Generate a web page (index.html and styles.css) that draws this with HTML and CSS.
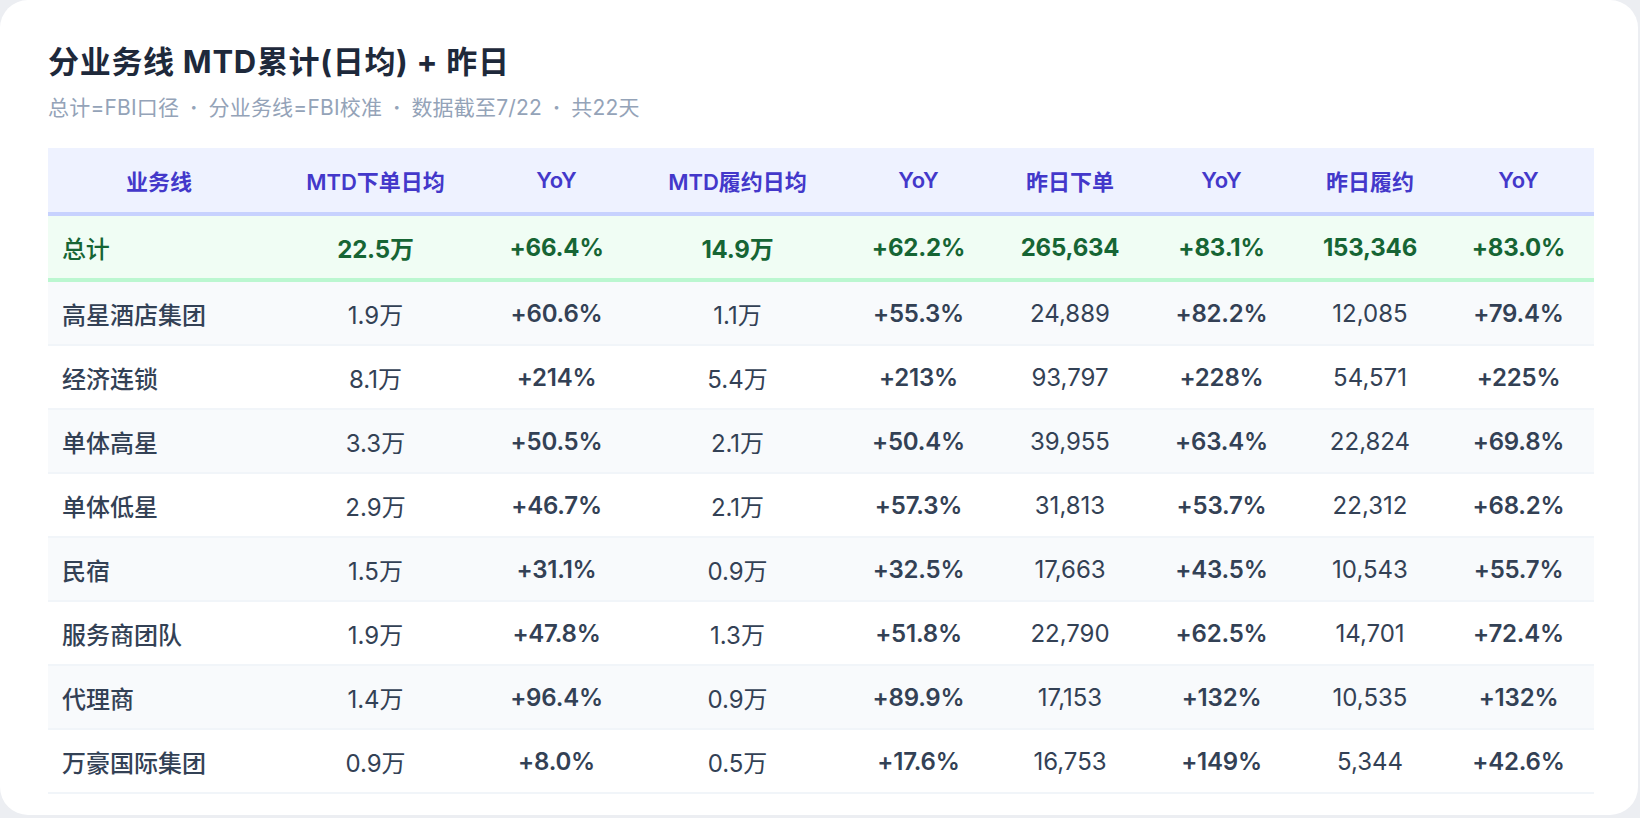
FILE: index.html
```html
<!DOCTYPE html>
<html lang="zh-CN">
<head>
<meta charset="utf-8">
<title>分业务线 MTD累计(日均) + 昨日</title>
<link rel="stylesheet" href="styles.css">
</head>
<body>
<div class="card">
  <h1 class="title">分业务线 MTD累计(日均) + 昨日</h1>
  <p class="subtitle">总计=FBI口径<span class="sep">·</span>分业务线=FBI校准<span class="sep">·</span>数据截至7/22<span class="sep">·</span>共22天</p>
  <table class="grid">
    <colgroup>
      <col class="c-name"><col class="c-mtd"><col class="c-yoy"><col class="c-mtd"><col class="c-yoy"><col class="c-day"><col class="c-yoy"><col class="c-day2"><col class="c-yoy">
    </colgroup>
    <thead>
      <tr>
        <th>业务线</th><th>MTD下单日均</th><th>YoY</th><th>MTD履约日均</th><th>YoY</th><th>昨日下单</th><th>YoY</th><th>昨日履约</th><th>YoY</th>
      </tr>
    </thead>
    <tbody>
      <tr class="total">
        <td class="name">总计</td><td>22.5万</td><td>+66.4%</td><td>14.9万</td><td>+62.2%</td><td>265,634</td><td>+83.1%</td><td>153,346</td><td>+83.0%</td>
      </tr>
      <tr class="row odd">
        <td class="name">高星酒店集团</td><td>1.9万</td><td class="yoy">+60.6%</td><td>1.1万</td><td class="yoy">+55.3%</td><td>24,889</td><td class="yoy">+82.2%</td><td>12,085</td><td class="yoy">+79.4%</td>
      </tr>
      <tr class="row">
        <td class="name">经济连锁</td><td>8.1万</td><td class="yoy">+214%</td><td>5.4万</td><td class="yoy">+213%</td><td>93,797</td><td class="yoy">+228%</td><td>54,571</td><td class="yoy">+225%</td>
      </tr>
      <tr class="row odd">
        <td class="name">单体高星</td><td>3.3万</td><td class="yoy">+50.5%</td><td>2.1万</td><td class="yoy">+50.4%</td><td>39,955</td><td class="yoy">+63.4%</td><td>22,824</td><td class="yoy">+69.8%</td>
      </tr>
      <tr class="row">
        <td class="name">单体低星</td><td>2.9万</td><td class="yoy">+46.7%</td><td>2.1万</td><td class="yoy">+57.3%</td><td>31,813</td><td class="yoy">+53.7%</td><td>22,312</td><td class="yoy">+68.2%</td>
      </tr>
      <tr class="row odd">
        <td class="name">民宿</td><td>1.5万</td><td class="yoy">+31.1%</td><td>0.9万</td><td class="yoy">+32.5%</td><td>17,663</td><td class="yoy">+43.5%</td><td>10,543</td><td class="yoy">+55.7%</td>
      </tr>
      <tr class="row">
        <td class="name">服务商团队</td><td>1.9万</td><td class="yoy">+47.8%</td><td>1.3万</td><td class="yoy">+51.8%</td><td>22,790</td><td class="yoy">+62.5%</td><td>14,701</td><td class="yoy">+72.4%</td>
      </tr>
      <tr class="row odd">
        <td class="name">代理商</td><td>1.4万</td><td class="yoy">+96.4%</td><td>0.9万</td><td class="yoy">+89.9%</td><td>17,153</td><td class="yoy">+132%</td><td>10,535</td><td class="yoy">+132%</td>
      </tr>
      <tr class="row">
        <td class="name">万豪国际集团</td><td>0.9万</td><td class="yoy">+8.0%</td><td>0.5万</td><td class="yoy">+17.6%</td><td>16,753</td><td class="yoy">+149%</td><td>5,344</td><td class="yoy">+42.6%</td>
      </tr>
    </tbody>
  </table>
</div>
</body>
</html>
```
FILE: styles.css
```css
html, body {
  margin: 0;
  padding: 0;
}
body {
  background: #eceef2;
  font-family: "Inter", "Noto Sans CJK SC", "Noto Sans", sans-serif;
  color: #334155;
}
.card {
  box-sizing: border-box;
  width: 1638px;
  height: 815px;
  background: #ffffff;
  border-radius: 28px;
  padding: 42px 46px 0 48px;
}
.title {
  margin: 0;
  font-size: 31px;
  line-height: 40px;
  font-weight: 700;
  color: #1e293b;
  letter-spacing: 0.7px;
}
.subtitle {
  margin: 12px 0 0;
  font-size: 21px;
  line-height: 28px;
  color: #94a3b8;
  font-weight: 400;
  letter-spacing: 0.2px;
}
.sep {
  display: inline-block;
  padding: 0 11px;
  font-weight: 700;
}
.grid {
  margin-top: 26px;
  width: 1544px;
  border-collapse: separate;
  border-spacing: 0;
  table-layout: fixed;
}
.c-name { width: 222px; }
.c-mtd { width: 211px; }
.c-yoy { width: 151px; }
.c-day { width: 152px; }
.c-day2 { width: 146px; }
.grid th {
  height: 64px;
  padding: 0;
  background: #eef2ff;
  color: #4338ca;
  font-size: 22px;
  font-weight: 600;
  text-align: center;
  border-bottom: 4px solid #c7d2fe;
}
.grid td {
  padding: 0;
  text-align: center;
  font-size: 24px;
  white-space: nowrap;
}
.grid td.name {
  text-align: left;
  padding-left: 14px;
  font-weight: 500;
}
.total td {
  height: 62px;
  background: #f0fdf4;
  color: #166534;
  font-weight: 700;
  letter-spacing: -0.2px;
  border-bottom: 4px solid #bbf7d0;
}
.row td {
  height: 62px;
  background: #ffffff;
  color: #334155;
  font-weight: 400;
  border-bottom: 2px solid #f1f5f9;
}
.row.odd td {
  background: #f8fafc;
}
.row td.yoy {
  font-weight: 600;
  letter-spacing: -0.2px;
}
```
